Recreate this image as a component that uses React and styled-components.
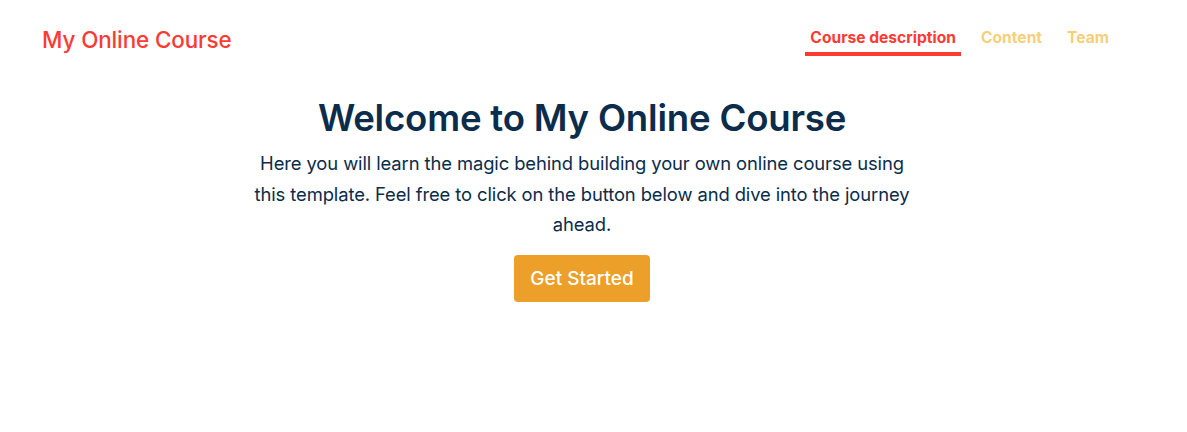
import React from "react"
import styled, { createGlobalStyle } from "styled-components"

const GlobalStyle = createGlobalStyle`
  body {
    margin: 0;
    background: #fff;
    font-family: Inter, "Noto Sans", sans-serif;
  }
`

const Page = styled.div`
  width: 1187px;
  min-height: 432px;
`

const Header = styled.header`
  display: flex;
  align-items: flex-start;
  justify-content: space-between;
  padding: 25px 73px 0 42px;
`

const Logo = styled.a`
  color: #ff3a33;
  font-size: 22.4px;
  font-weight: 500;
  line-height: 30px;
  text-decoration: none;
  letter-spacing: -0.1px;
`

const NavLinks = styled.ul`
  list-style: none;
  display: flex;
  gap: 15px;
  margin: 0;
  padding: 0;
`

const NavLink = styled.li`
  padding: 3px 5px 4px;
  font-size: 15.6px;
  font-weight: 700;
  line-height: 20px;
  color: ${p => (p.$active ? "#ff3a33" : "#f6cf78")};
  border-bottom: 4px solid ${p => (p.$active ? "#ff3a33" : "transparent")};
`

const Hero = styled.main`
  width: 1164px;
  display: flex;
  flex-direction: column;
  align-items: center;
  text-align: center;
  padding-top: 39px;
`

const Title = styled.h1`
  margin: 0;
  color: #0b2c4b;
  font-size: 36.6px;
  font-weight: 600;
  line-height: 46px;
  letter-spacing: -0.2px;
`

const Lead = styled.p`
  margin: 7px 0 0;
  width: 670px;
  color: #0b2c4b;
  font-size: 18.4px;
  line-height: 30.5px;
  letter-spacing: -0.1px;
`

const Button = styled.button`
  margin-top: 15px;
  width: 136px;
  height: 47px;
  border: none;
  border-radius: 4px;
  background: #eca02a;
  color: #fff;
  font-family: inherit;
  font-size: 19px;
  font-weight: 500;
  cursor: pointer;
`

export default function App() {
  return (
    <Page>
      <GlobalStyle />
      <Header>
        <Logo>My Online Course</Logo>
        <nav>
          <NavLinks>
            <NavLink $active>Course description</NavLink>
            <NavLink>Content</NavLink>
            <NavLink>Team</NavLink>
          </NavLinks>
        </nav>
      </Header>
      <Hero>
        <Title>Welcome to My Online Course</Title>
        <Lead>
          Here you will learn the magic behind building your own online course using
          this template. Feel free to click on the button below and dive into the journey
          ahead.
        </Lead>
        <Button>Get Started</Button>
      </Hero>
    </Page>
  )
}
